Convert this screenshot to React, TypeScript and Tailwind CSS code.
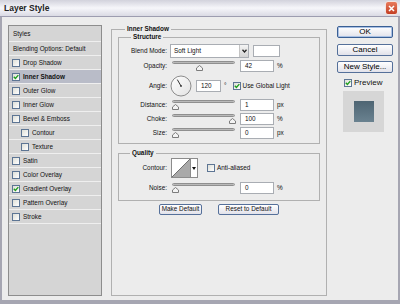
import React from "react";

type StyleRow = { label: string; checked?: boolean; active?: boolean; sub?: boolean };

const styleRows: StyleRow[] = [
  { label: "Drop Shadow" },
  { label: "Inner Shadow", checked: true, active: true },
  { label: "Outer Glow" },
  { label: "Inner Glow" },
  { label: "Bevel & Emboss" },
  { label: "Contour", sub: true },
  { label: "Texture", sub: true },
  { label: "Satin" },
  { label: "Color Overlay" },
  { label: "Gradient Overlay", checked: true },
  { label: "Pattern Overlay" },
  { label: "Stroke" },
];

function Check({ checked }: { checked?: boolean }) {
  return (
    <span className="flex h-[8px] w-[8px] shrink-0 items-center justify-center border border-[#5d7594] bg-gradient-to-br from-[#dedfd8] to-white">
      {checked && (
        <svg width="6" height="6" viewBox="0 0 6 6">
          <path d="M0.8 2.8 L2.4 4.5 L5.3 1.1" stroke="#1f9e1f" strokeWidth="1.4" fill="none" />
        </svg>
      )}
    </span>
  );
}

function Slider({ value, max }: { value: number; max: number }) {
  const left = Math.round((value / max) * 57);
  return (
    <div className="relative h-[12px] w-[63px]">
      <div className="mt-[2px] h-[3px] w-full rounded-full border border-[#8f8f8f] bg-gradient-to-b from-[#9a9a9a] to-[#dadada]" />
      <svg className="absolute top-[4px]" style={{ left }} width="7" height="6" viewBox="0 0 7 6">
        <path d="M3.5 0.5 L6.5 3 V5.5 H0.5 V3 Z" fill="#f3f3f3" stroke="#7c7c7c" />
      </svg>
    </div>
  );
}

function Field({ value, className }: { value: string; className: string }) {
  return (
    <div className={`flex h-[12px] items-center border border-[#a9adb3] bg-white pl-[4px] ${className}`}>
      {value}
    </div>
  );
}

function Label({ children }: { children: React.ReactNode }) {
  return <span className="w-[48px] shrink-0 text-right">{children}</span>;
}

function SliderRow({ label, value, max, unit, className }: { label: string; value: number; max: number; unit: string; className: string }) {
  return (
    <div className={`flex h-[12px] items-center ${className}`}>
      <Label>{label}</Label>
      <div className="ml-[5px]">
        <Slider value={value} max={max} />
      </div>
      <Field value={String(value)} className="ml-[5px] w-[34px]" />
      <span className="ml-[3px]">{unit}</span>
    </div>
  );
}

function DialogButton({ children, primary }: { children: React.ReactNode; primary?: boolean }) {
  return (
    <button
      className={`flex h-[12px] w-[56px] items-center justify-center rounded-[2px] border bg-gradient-to-b from-white to-[#e2e2ea] text-[8px] leading-none text-black ${
        primary ? "border-[#3a5f94] shadow-[inset_0_0_0_1px_#a9c1e4]" : "border-[#55709a]"
      }`}
    >
      {children}
    </button>
  );
}

export default function App() {
  return (
    <div className="flex h-[304px] w-[400px] flex-col bg-[#ececec] font-['Liberation_Sans',Arial,sans-serif] text-[6.4px] leading-[8px] text-[#111]">
      {/* title bar */}
      <div className="flex h-[17px] shrink-0 items-center justify-between border-b border-[#9d9db0] bg-gradient-to-b from-[#d2d2dc] via-[#f6f6fa] to-[#dadae4] pl-[4px] pr-[2px]">
        <span className="text-[8.5px] font-bold leading-none text-[#222]">Layer Style</span>
        <span className="flex h-[14px] w-[13px] items-center justify-center rounded-[3px] border border-[#f4e4e0] bg-gradient-to-b from-[#e87a5c] to-[#c33d22]">
          <svg width="7" height="7" viewBox="0 0 7 7">
            <path d="M1 1 L6 6 M6 1 L1 6" stroke="#fff" strokeWidth="1.5" />
          </svg>
        </span>
      </div>

      <div className="flex flex-1 border-x-2 border-b-4 border-[#a6a6b2] pl-[6px] pt-[8px]">
        {/* styles list */}
        <div className="flex h-[271px] w-[94px] shrink-0 flex-col border border-[#8d8d8d] bg-[#d5d5d5]">
          <div className="flex h-[16px] shrink-0 items-center border-b border-[#efefef] pl-[4px]">Styles</div>
          <div className="flex h-[14px] shrink-0 items-center border-b border-[#efefef] pl-[4px]">Blending Options: Default</div>
          {styleRows.map((r) => (
            <div
              key={r.label}
              className={`flex h-[14px] shrink-0 items-center gap-[3px] border-b border-[#efefef] ${r.sub ? "pl-[12px]" : "pl-[3px]"} ${
                r.active ? "bg-[#b9bcc8] font-bold" : ""
              }`}
            >
              <Check checked={r.checked} />
              <span>{r.label}</span>
            </div>
          ))}
        </div>

        {/* main settings */}
        <fieldset className="ml-[9px] h-[271px] w-[216px] shrink-0 border border-[#b0b0b0] px-[6px]">
          <legend className="ml-[7px] px-[2px] font-bold">Inner Shadow</legend>

          <fieldset className="border border-[#b0b0b0] pb-[4px]">
            <legend className="ml-[12px] px-[2px] font-bold">Structure</legend>
            <div className="mt-[3px] flex h-[14px] items-center">
              <Label>Blend Mode:</Label>
              <div className="ml-[3px] flex h-[14px] w-[79px] items-stretch border border-[#a9adb3] bg-white">
                <span className="flex flex-1 items-center pl-[3px]">Soft Light</span>
                <span className="flex w-[9px] items-center justify-center border-l border-[#c4c4c4] bg-gradient-to-b from-[#f4f4f4] to-[#d4d4d4]">
                  <svg width="5" height="4" viewBox="0 0 5 4">
                    <path d="M0.5 0.8 L2.5 3 L4.5 0.8" stroke="#222" strokeWidth="1.3" fill="none" />
                  </svg>
                </span>
              </div>
              <span className="ml-[4px] h-[12px] w-[27px] border border-[#a9adb3] bg-white" />
            </div>

            <SliderRow label="Opacity:" value={42} max={100} unit="%" className="mt-[2px]" />

            <div className="mt-[3px] flex h-[22px] items-center">
              <Label>Angle:</Label>
              <svg className="ml-[3px]" width="22" height="22" viewBox="0 0 22 22">
                <defs>
                  <linearGradient id="dial" x1="0" y1="0" x2="1" y2="1">
                    <stop offset="0" stopColor="#ffffff" />
                    <stop offset="1" stopColor="#e2e2e2" />
                  </linearGradient>
                </defs>
                <circle cx="11" cy="11" r="10" fill="url(#dial)" stroke="#8c8c8c" />
                <path d="M11 11 L7.3 4.6" stroke="#333" strokeWidth="1" />
                <circle cx="11" cy="11" r="0.9" fill="#333" />
              </svg>
              <Field value="120" className="ml-[4px] w-[25px]" />
              <span className="ml-[3px]">°</span>
              <span className="ml-[6px]">
                <Check checked />
              </span>
              <span className="ml-[2px]">Use Global Light</span>
            </div>

            <SliderRow label="Distance:" value={1} max={250} unit="px" className="mt-[2px]" />
            <SliderRow label="Choke:" value={100} max={100} unit="%" className="mt-[2px]" />
            <SliderRow label="Size:" value={0} max={250} unit="px" className="mt-[2px]" />
          </fieldset>

          <fieldset className="mt-[5px] border border-[#b0b0b0] pb-[6px]">
            <legend className="ml-[11px] px-[2px] font-bold">Quality</legend>
            <div className="mt-[1px] flex h-[20px] items-center">
              <Label>Contour:</Label>
              <div className="ml-[4px] flex h-[20px] border border-[#8c8c8c] bg-white">
                <svg width="18" height="18" viewBox="0 0 18 18">
                  <path d="M0 18 L18 0 V18 Z" fill="#a9a9a9" />
                  <path d="M0 18 L18 0" stroke="#555" strokeWidth="0.8" />
                </svg>
                <span className="flex w-[7px] items-center justify-center border-l border-[#8c8c8c] bg-white">
                  <svg width="4" height="3" viewBox="0 0 4 3">
                    <path d="M0 0 H4 L2 3 Z" fill="#111" />
                  </svg>
                </span>
              </div>
              <span className="ml-[9px]">
                <Check />
              </span>
              <span className="ml-[2px]">Anti-aliased</span>
            </div>
            <SliderRow label="Noise:" value={0} max={100} unit="%" className="mt-[4px]" />
          </fieldset>

          <div className="mt-[3px] flex justify-center gap-[16px]">
            <button className="flex h-[11px] w-[43px] items-center justify-center rounded-[2px] border border-[#55709a] bg-gradient-to-b from-white to-[#e2e2ea] text-[6.4px] leading-none">
              Make Default
            </button>
            <button className="flex h-[11px] w-[61px] items-center justify-center rounded-[2px] border border-[#55709a] bg-gradient-to-b from-white to-[#e2e2ea] text-[6.4px] leading-none">
              Reset to Default
            </button>
          </div>
        </fieldset>

        {/* right column */}
        <div className="ml-[10px] flex w-[56px] shrink-0 flex-col pt-[1px]">
          <DialogButton primary>OK</DialogButton>
          <div className="mt-[6px]">
            <DialogButton>Cancel</DialogButton>
          </div>
          <div className="mt-[5px]">
            <DialogButton>New Style...</DialogButton>
          </div>
          <div className="mt-[6px] flex items-center pl-[7px] text-[8px]">
            <Check checked />
            <span className="ml-[2px]">Preview</span>
          </div>
          <div className="ml-[6px] mt-[4px] flex h-[41px] w-[41px] items-center justify-center bg-[#d6d6d6]">
            <div className="h-[21px] w-[20px] bg-gradient-to-b from-[#4e6573] to-[#6a8290]" />
          </div>
        </div>
      </div>
    </div>
  );
}
